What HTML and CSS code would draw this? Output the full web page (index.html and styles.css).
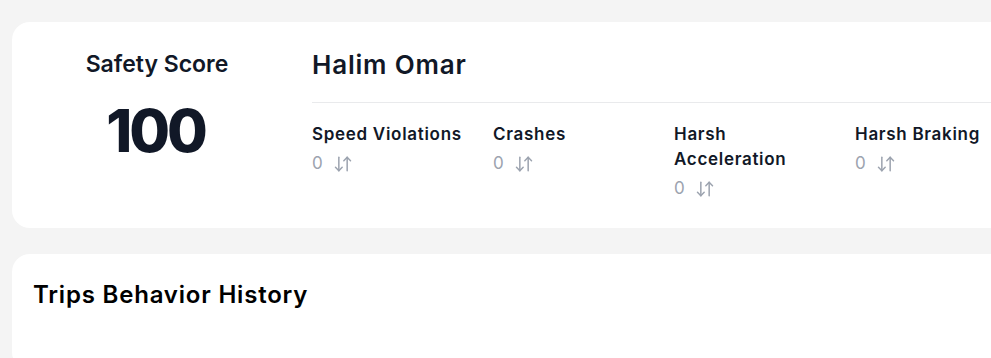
FILE: index.html
```html
<!DOCTYPE html>
<html lang="en">
<head>
<meta charset="utf-8">
<title>Driver Safety</title>
<link rel="stylesheet" href="styles.css">
</head>
<body>
<div class="page">
  <section class="card summary">
    <div class="score">
      <h2 class="score-title">Safety Score</h2>
      <div class="score-value">100</div>
    </div>
    <div class="driver">
      <h1 class="driver-name">Halim Omar</h1>
      <div class="metrics">
        <div class="metric">
          <div class="metric-label">Speed Violations</div>
          <div class="metric-value"><span>0</span>
            <svg class="sort" viewBox="0 0 24 24"><path d="m3 16 4 4 4-4"/><path d="M7 20V4"/><path d="m21 8-4-4-4 4"/><path d="M17 4v16"/></svg>
          </div>
        </div>
        <div class="metric">
          <div class="metric-label">Crashes</div>
          <div class="metric-value"><span>0</span>
            <svg class="sort" viewBox="0 0 24 24"><path d="m3 16 4 4 4-4"/><path d="M7 20V4"/><path d="m21 8-4-4-4 4"/><path d="M17 4v16"/></svg>
          </div>
        </div>
        <div class="metric">
          <div class="metric-label">Harsh Acceleration</div>
          <div class="metric-value"><span>0</span>
            <svg class="sort" viewBox="0 0 24 24"><path d="m3 16 4 4 4-4"/><path d="M7 20V4"/><path d="m21 8-4-4-4 4"/><path d="M17 4v16"/></svg>
          </div>
        </div>
        <div class="metric">
          <div class="metric-label">Harsh Braking</div>
          <div class="metric-value"><span>0</span>
            <svg class="sort" viewBox="0 0 24 24"><path d="m3 16 4 4 4-4"/><path d="M7 20V4"/><path d="m21 8-4-4-4 4"/><path d="M17 4v16"/></svg>
          </div>
        </div>
      </div>
    </div>
  </section>
  <section class="card history">
    <h2 class="history-title">Trips Behavior History</h2>
  </section>
</div>
</body>
</html>
```
FILE: styles.css
```css
html, body {
  margin: 0;
  padding: 0;
  background: #f4f4f4;
  overflow: hidden;
}
body {
  font-family: Inter, "Open Sans", sans-serif;
  color: #111827;
}
.page {
  padding: 22px 0 0 12px;
  display: flex;
  flex-direction: column;
  gap: 26px;
}
.card {
  background: #ffffff;
  border-radius: 18px 0 0 18px;
}
.summary {
  display: flex;
  gap: 34px;
  padding: 27px 0 27px 24px;
}
.score {
  width: 242px;
  display: flex;
  flex-direction: column;
  align-items: center;
}
.score-title {
  margin: 0;
  font-size: 23px;
  line-height: 30px;
  font-weight: 600;
}
.score-value {
  margin-top: 20px;
  font-size: 59px;
  line-height: 64px;
  font-weight: 800;
  letter-spacing: -3px;
  padding-right: 3px;
}
.driver {
  flex: 1;
  min-width: 0;
}
.driver-name {
  margin: 0;
  font-size: 26px;
  line-height: 32px;
  font-weight: 600;
  letter-spacing: 0.8px;
  padding-bottom: 21px;
  border-bottom: 1px solid #e9eaec;
}
.metrics {
  display: grid;
  grid-template-columns: 181px 181px 181px 1fr;
  padding-top: 19px;
}
.metric-label {
  max-width: 165px;
  font-size: 17px;
  line-height: 25px;
  font-weight: 600;
  letter-spacing: 0.7px;
  white-space: normal;
}
.metric-value {
  margin-top: 4px;
  display: flex;
  align-items: center;
  gap: 10px;
  font-size: 17px;
  line-height: 25px;
  color: #9ca3af;
}
.sort {
  width: 20px;
  height: 20px;
  fill: none;
  stroke: #9ca3af;
  stroke-width: 1.8;
  stroke-linecap: round;
  stroke-linejoin: round;
}
.history {
  padding: 26px 21px 60px;
}
.history-title {
  margin: 0;
  font-size: 24px;
  line-height: 30px;
  font-weight: 600;
  letter-spacing: 0.8px;
  color: #000000;
}
```
